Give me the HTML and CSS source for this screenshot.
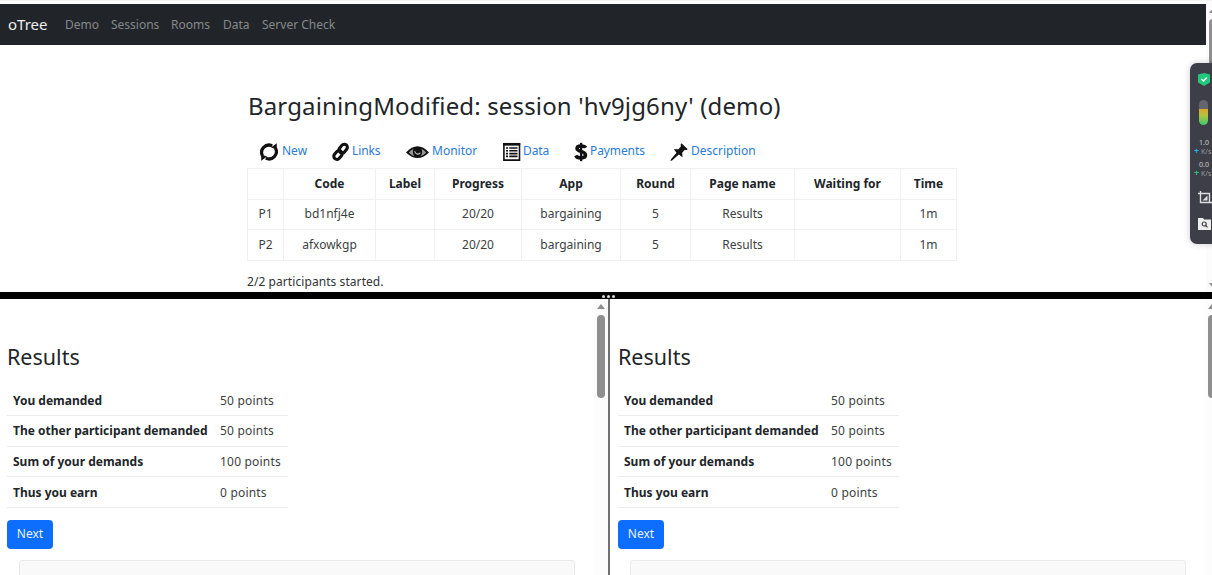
FILE: index.html
```html
<!DOCTYPE html>
<html lang="en">
<head>
<meta charset="utf-8">
<title>oTree</title>
<link rel="stylesheet" href="styles.css">
</head>
<body>
<section class="admin">
  <div class="admin-main">
    <nav class="navbar"><span class="brand">oTree</span><span class="n1">Demo</span><span class="n2">Sessions</span><span class="n3">Rooms</span><span class="n4">Data</span><span>Server Check</span></nav>
    <div class="session">
      <h1><span>BargainingModified: session 'hv9jg6ny' (demo)</span></h1>
      <div class="tabs">
        <a><svg width="18" height="20" viewBox="0 0 18 20" fill="none" stroke="#111" stroke-width="3.2"><path d="M2.6 14A7.3 7.3 0 0 1 12.2 3.9M15.4 6A7.3 7.3 0 0 1 5.8 16.1"/><path d="M11 5.6 16.8 1.2V7.4ZM7 14.4 1.2 18.8V12.6Z" fill="#111" stroke="none"/></svg><span>New</span></a>
        <a><svg width="18" height="20" viewBox="0 0 18 20" fill="none" stroke="#111" stroke-width="3.1"><rect x="-3.1" y="-4.8" width="6.2" height="9.6" rx="3.1" transform="translate(11.2 6.6) rotate(40)"/><rect x="-3.1" y="-4.8" width="6.2" height="9.6" rx="3.1" transform="translate(6 13) rotate(40)"/></svg><span class="t2">Links</span></a>
        <a><svg width="23" height="20" viewBox="0 0 23 20"><path d="M0 10.5Q11.5-2 23 10.5 11.5 21.5 0 10.5Z" fill="#111"/><path d="M2.8 10.5Q5 7.7 7.5 7 5.7 11 8.5 14.2 5 13 2.8 10.5ZM20.2 10.5Q18 7.7 15.5 7 17.3 11 14.5 14.2 18 13 20.2 10.5Z" fill="#999"/><path d="M8.8 9.3A3 3 0 0 0 14.3 10.8" fill="none" stroke="#ccc" stroke-width="1.1"/></svg><span class="t3">Monitor</span></a>
        <a><svg width="18" height="20" viewBox="0 0 18 20"><path d="M.9 1.7H16.5V18.1H.9Z" fill="#fff" stroke="#111" stroke-width="1.6"/><path d="M.2 2.3H17.2" stroke="#111" stroke-width="2.7"/><path d="M3 6H5M6.3 6H14.5M3 8.8H5M6.3 8.8H14.5M3 11.6H5M6.3 11.6H14.5M3 14.4H5M6.3 14.4H14.5" stroke="#111" stroke-width="1.6"/></svg><span class="t4">Data</span></a>
        <a><svg width="14" height="20" viewBox="0 0 14 20" fill="none" stroke="#111"><path d="M11.6 5.7C10.5 3.6 3 2.8 3 6.5 3 10 11.5 8.8 11.5 13 11.5 17 3 16.6 1.8 13.5" stroke-width="3.5"/><path d="M7.1 .8V19.2" stroke-width="2.3"/></svg><span class="t5">Payments</span></a>
        <a><svg width="18" height="20" viewBox="0 0 18 20"><path d="M11.5 1.2 17.8 7.2 16 8.2 14.8 7.7 12.2 10.7 12.5 15.2 8.8 12.5 2 18.6.4 19 1 17.2 6.5 10.7 3.8 7.3 8.5 7.2 11 4.2 10.5 3Z" fill="#111"/></svg><span class="t6">Description</span></a>
      </div>
      <table class="grid">
        <colgroup><col class="c36"><col class="c92"><col class="c59"><col class="c87"><col class="c99"><col class="c70"><col class="c104"><col class="c106"><col class="c56"></colgroup>
        <tr><th></th><th>Code</th><th>Label</th><th>Progress</th><th>App</th><th>Round</th><th>Page name</th><th>Waiting for</th><th>Time</th></tr>
        <tr><td>P1</td><td>bd1nfj4e</td><td></td><td>20/20</td><td>bargaining</td><td>5</td><td>Results</td><td></td><td>1m</td></tr>
        <tr><td>P2</td><td>afxowkgp</td><td></td><td>20/20</td><td>bargaining</td><td>5</td><td>Results</td><td></td><td>1m</td></tr>
      </table>
      <p class="started">2/2 participants started.</p>
    </div>
  </div>
  <div class="scroll"><i class="up"></i><i class="thumb tall"></i><i class="down"></i></div>
</section>
<div class="splitter"><i></i><i></i><i></i></div>
<div class="panes">
  <section class="pane left">
    <div class="content">
      <h2>Results</h2>
      <table class="results">
        <tr><th>You demanded</th><td>50 points</td></tr>
        <tr><th>The other participant demanded</th><td>50 points</td></tr>
        <tr><th>Sum of your demands</th><td>100 points</td></tr>
        <tr><th>Thus you earn</th><td>0 points</td></tr>
      </table>
      <button class="next">Next</button>
      <div class="card"></div>
    </div>
    <div class="scroll"><i class="up"></i><i class="thumb"></i></div>
  </section>
  <section class="pane">
    <div class="content">
      <h2>Results</h2>
      <table class="results">
        <tr><th>You demanded</th><td>50 points</td></tr>
        <tr><th>The other participant demanded</th><td>50 points</td></tr>
        <tr><th>Sum of your demands</th><td>100 points</td></tr>
        <tr><th>Thus you earn</th><td>0 points</td></tr>
      </table>
      <button class="next">Next</button>
      <div class="card"></div>
    </div>
    <div class="scroll"><i class="up"></i><i class="thumb"></i></div>
  </section>
</div>
<aside class="widget">
  <svg class="shield" width="12" height="13" viewBox="0 0 12 13"><path d="M0 1.5 6 0 12 1.5V9.5L6 13 0 9.5Z" fill="#20c77c"/><path d="M3.3 6 5.4 8 8.8 4.6" fill="none" stroke="#fff" stroke-width="1.4"/></svg>
  <div class="meter"></div>
  <div class="speed"><span>1.0</span><span class="unit"><b class="blue">+</b> K/s</span></div>
  <div class="speed second"><span>0.0</span><span class="unit"><b class="green">+</b> K/s</span></div>
  <svg class="crop" width="14" height="14" viewBox="0 0 14 14" fill="none" stroke="#ddd" stroke-width="1.4"><path d="M0 2.5H11.5V11M2.5 0V11.5H14"/><path d="M4.5 9.5 9.5 4.5V9.5Z" fill="#ddd" stroke="none"/></svg>
  <svg class="search" width="13" height="12" viewBox="0 0 13 12"><path d="M0 0H5L6 1.5H13V12H0Z" fill="#eee"/><circle cx="6.2" cy="6" r="2" fill="none" stroke="#444" stroke-width="1.2"/><path d="M7.7 7.5 9.5 9.3" stroke="#444" stroke-width="1.2"/></svg>
</aside>
</body>
</html>
```

FILE: styles.css
```css
* { box-sizing: border-box; }
body { margin: 0; width: 1212px; height: 575px; overflow: hidden; position: relative; background: #fff; color: #212529; font: 12px/18px "Noto Sans", "Open Sans", sans-serif; }
.admin { height: 292px; display: flex; border-top: 1px solid #f2f2f2; overflow: hidden; }
.admin-main { width: 1206px; padding-top: 3px; flex: none; }
.navbar { height: 41px; background: #212529; color: #85888a; display: flex; align-items: center; padding-left: 8px; white-space: nowrap; }
.brand { color: #eee; font-size: 15px; width: 57px; padding-bottom: 2px; }
.n1 { width: 46px; }
.n2 { width: 60px; }
.n3 { width: 52px; }
.n4 { width: 39px; }
.session { width: 710px; margin-left: 247px; padding-top: 43px; }
h1, h2 { font-weight: 400; margin: 0; white-space: nowrap; }
h1 { font-size: 24px; line-height: 36px; height: 52px; letter-spacing: .14px; padding-left: 1px; }
.tabs { display: grid; grid-template-columns: 72px 74px 97px 71px 96px 100px; padding-left: 13px; height: 28px; }
.tabs a { display: flex; align-items: flex-start; gap: 4px; color: #2a7bd5; white-space: nowrap; padding-top: 2px; height: 24px; }
.tabs span { line-height: 17px; }
.tabs .t2, .tabs .t4, .tabs .t5 { margin-left: -2px; letter-spacing: -.1px; }
.tabs .t3, .tabs .t6 { margin-left: -1px; }
.tabs svg { flex: none; }
.grid { border-collapse: collapse; table-layout: fixed; width: 709px; text-align: center; }
.grid th, .grid td { border: 1px solid #eff0f1; height: 30.6px; padding: 0; }
.grid td, .results td { color: #3c3f42; }
.c36 { width: 36px; } .c92 { width: 92px; } .c59 { width: 59px; } .c87 { width: 87px; }
.c99 { width: 99px; } .c70 { width: 70px; } .c104 { width: 104px; } .c106 { width: 106px; } .c56 { width: 56px; }
.started { margin: 12px 0 0; color: #303337; letter-spacing: .07px; }
.splitter { height: 7px; background: #000; display: flex; justify-content: center; align-items: center; gap: 2px; padding: 1px 0 0 5px; }
.splitter i { width: 3px; height: 3px; border-radius: 50%; background: #ddd; }
.panes { display: flex; height: 276px; }
.pane { width: 602px; flex: none; display: flex; overflow: hidden; }
.pane.left { width: 610px; border-right: 2px solid #707070; }
.content { width: 594px; padding: 42px 0 0 7px; flex: none; }
.pane:not(.left) .content { padding-left: 8px; width: 595px; }
h2 { font-size: 21.5px; line-height: 32px; height: 44px; }
.results { border-collapse: collapse; text-align: left; width: 281px; }
.results th, .results td { height: 30.6px; padding: 1px 0 0 6px; border-bottom: 1px solid #e9ebed; white-space: nowrap; }
.results th { width: 206px; }
.results td { letter-spacing: .2px; padding-left: 7px; }
.next { display: block; width: 46px; height: 29px; margin-top: 12px; padding: 0; border: 0; border-radius: 4px; background: #0d6efd; color: #e8f1ff; font: inherit; }
.card { margin: 11px 0 0 12px; width: 556px; height: 40px; border: 1px solid #e9eaeb; border-radius: 3px; background: #f9f9f9; }
.scroll { display: flex; flex-direction: column; align-items: center; width: 14px; flex: none; background: #fcfcfc; }
.admin .scroll { width: 13px; }
.up { border: 4px solid transparent; border-top: 0; border-bottom: 5px solid #8d8d8d; margin-top: 5px; }
.down { border: 4px solid transparent; border-bottom: 0; border-top: 5px solid #8d8d8d; margin-top: auto; margin-bottom: 4px; }
.thumb { width: 8px; height: 83px; border-radius: 4px; background: #8f8f8f; margin-top: 6px; }
.admin .up { margin-top: 7px; }
.tall { height: 140px; }
.widget { position: absolute; left: 1190px; top: 63px; width: 32px; height: 181px; border-radius: 7px; background: #3d3e47; box-shadow: 0 0 7px #0003; color: #ccc; padding: 10px 0 0 8px; display: flex; flex-direction: column; }
.widget svg { flex: none; }
.meter { width: 9px; height: 25px; margin: 14px 0 0 1px; flex: none; border-radius: 5px; background: linear-gradient(#65666c 0 36%, #dca62c 36%, #b8c13e 60%, #39cd70); }
.speed { display: flex; flex-direction: column; font-size: 7px; line-height: 9px; margin-top: 13px; white-space: nowrap; }
.speed span { padding-left: 1px; }
.speed .unit { color: #9b9ca2; margin-left: -5px; }
.speed b { font-size: 9px; line-height: 7px; }
.second { margin-top: 4px; }
.blue { color: #22b1e8; }
.green { color: #2ac37c; }
.crop { margin-top: 13px; }
.search { margin-top: 13px; }
```
